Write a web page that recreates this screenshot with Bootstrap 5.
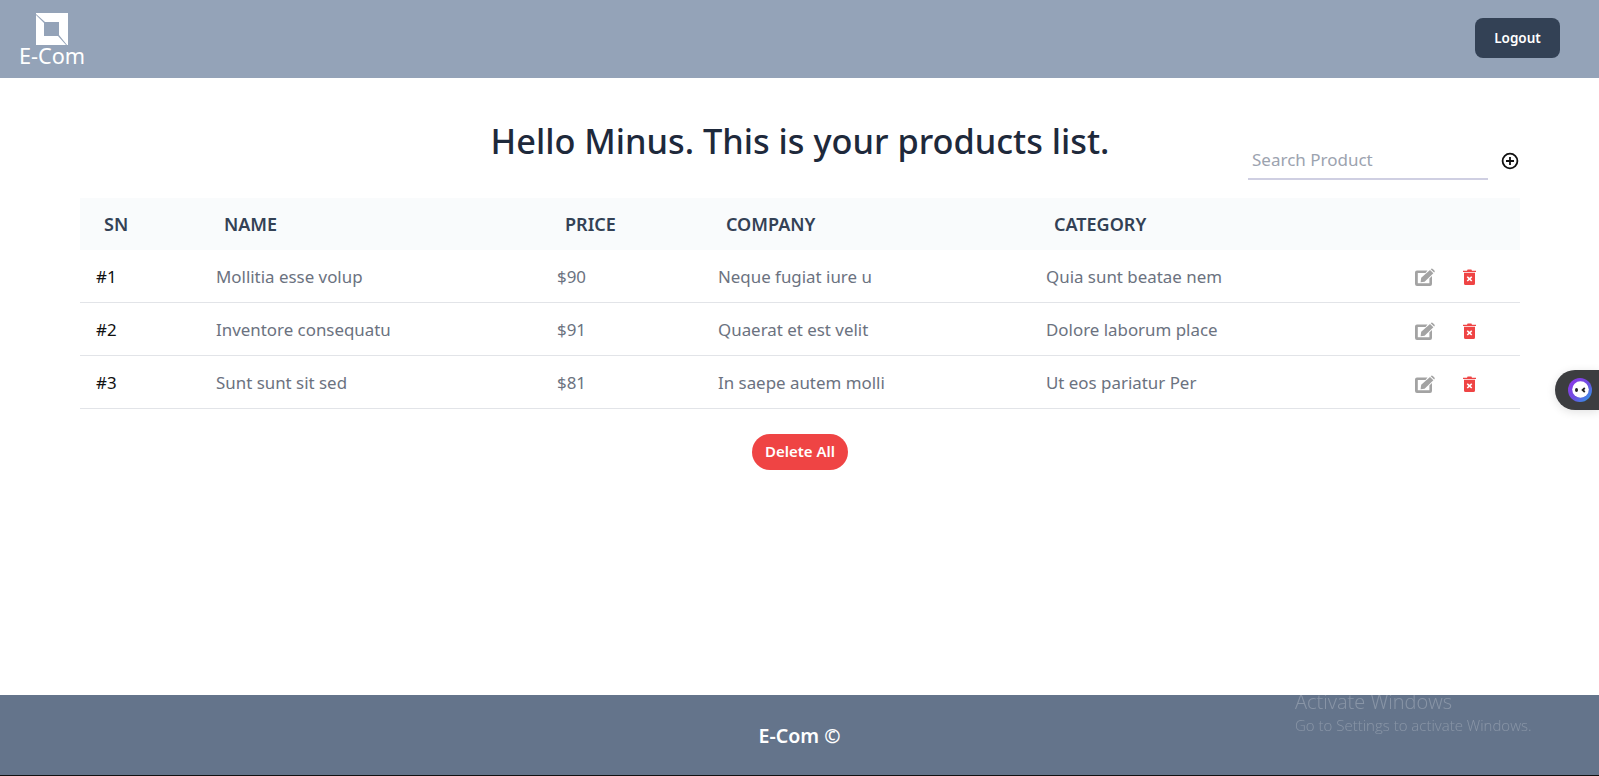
<!DOCTYPE html>
<html lang="en">
  <head>
    <meta charset="UTF-8" />
    <meta name="viewport" content="width=device-width, initial-scale=1.0" />
    <title>E-Com</title>
    <link
      href="https://cdn.jsdelivr.net/npm/bootstrap@5.3.0/dist/css/bootstrap.min.css"
      rel="stylesheet"
    />
    <style>
      body {
        font-family: "Noto Sans", "Open Sans", sans-serif;
        height: 776px;
        overflow: hidden;
      }
      .top-bar {
        height: 78px;
        background-color: #94a3b8;
        padding: 0 39px 0 19px;
      }
      .brand-box {
        width: 66px;
        color: #fff;
        font-size: 21.7px;
        line-height: 21px;
        padding-top: 13px;
        white-space: nowrap;
      }
      .btn-logout {
        width: 85px;
        height: 40px;
        background-color: #334155;
        color: #fff;
        font-size: 13.5px;
        font-weight: 600;
        border-radius: 8px;
        border: 0;
        margin-bottom: 2px;
      }
      .page-main {
        padding: 0 79px 0 80px;
      }
      .title-row {
        display: grid;
        grid-template-columns: 1fr auto 1fr;
        height: 120px;
      }
      .page-title {
        font-size: 34.3px;
        font-weight: 500;
        color: #1e293b;
        margin: 39px 0 0;
        line-height: 47px;
      }
      .search-box {
        justify-self: end;
        margin-top: 66px;
        gap: 13px;
        padding-right: 1px;
      }
      .search-input {
        width: 240px;
        height: 36px;
        border: 0;
        border-bottom: 2px solid #cfcfe2;
        outline: 0;
        padding: 0 4px 3px;
        font-size: 17px;
      }
      .search-input::placeholder {
        color: #9ca3af;
      }
      .product-table {
        table-layout: fixed;
        margin-bottom: 0;
      }
      .product-table th {
        background-color: #f9fbfc;
        color: #334155;
        font-size: 18px;
        font-weight: 600;
        height: 52px;
        padding: 0 0 0 24px;
        vertical-align: middle;
        border-bottom: 0;
      }
      .product-table td {
        color: #6b7280;
        font-size: 16.9px;
        height: 53px;
        padding: 2px 0 0 16px;
        vertical-align: middle;
        border-bottom: 1px solid #e2e4e8;
      }
      .product-table tbody tr:first-child td {
        height: 52px;
        padding-top: 1px;
      }
      .product-table td.row-num {
        color: #111;
      }
      .row-actions {
        gap: 27px;
        padding-left: 49px;
        padding-top: 2px;
      }
      .btn-delete-all {
        width: 96px;
        height: 36px;
        background-color: #ef4444;
        color: #fff;
        font-size: 15px;
        font-weight: 600;
        border: 0;
        border-radius: 18px;
        padding: 0;
        margin-top: 25px;
      }
      .page-foot {
        height: 81px;
        background-color: #64748b;
        color: #fff;
        font-size: 19.6px;
        font-weight: 600;
        padding-top: 2px;
        border-bottom: 1px solid #111;
      }
      .chat-tab {
        position: fixed;
        right: 0;
        top: 370px;
        width: 44px;
        height: 40px;
        background-color: #3c3d40;
        border-radius: 20px 0 0 20px;
        padding-left: 13px;
        display: flex;
        align-items: center;
        box-shadow: 0 2px 10px rgba(0, 0, 0, 0.12);
      }
      .activate-note {
        position: fixed;
        left: 1295px;
        top: 689px;
        color: rgba(255, 255, 255, 0.24);
        font-family: "Open Sans", sans-serif;
        font-weight: 300;
      }
      .activate-note div:first-child {
        font-size: 20px;
        line-height: 26px;
      }
      .activate-note div:last-child {
        font-size: 15px;
        line-height: 20px;
      }
    </style>
  </head>

  <body class="d-flex flex-column">
    <header class="top-bar d-flex justify-content-between align-items-center flex-shrink-0">
      <div class="brand-box text-center align-self-start">
        <svg width="32" height="32" viewBox="0 0 32 32" class="d-block mx-auto">
          <path d="M0 0H32V32H31L23 22V9H9L0 1Z" fill="#fff" />
          <path d="M0 2L8 10V23H22L30 32H0Z" fill="#fff" />
        </svg>
        <div>E-Com</div>
      </div>
      <button class="btn-logout">Logout</button>
    </header>

    <main class="page-main flex-grow-1">
      <div class="title-row">
        <div></div>
        <h1 class="page-title">Hello Minus. This is your products list.</h1>
        <div class="search-box d-flex align-items-start">
          <input class="search-input" type="text" placeholder="Search Product" />
          <svg class="mt-2" width="18" height="18" viewBox="0 0 18 18" fill="none" stroke="#111" stroke-width="1.8">
            <circle cx="9" cy="9" r="7.4" />
            <path d="M9 5V13M5 9H13" />
          </svg>
        </div>
      </div>

      <table class="table product-table">
        <colgroup>
          <col style="width: 120px" />
          <col style="width: 341px" />
          <col style="width: 161px" />
          <col style="width: 328px" />
          <col style="width: 320px" />
          <col />
        </colgroup>
        <thead>
          <tr>
            <th>SN</th>
            <th>NAME</th>
            <th>PRICE</th>
            <th>COMPANY</th>
            <th>CATEGORY</th>
            <th></th>
          </tr>
        </thead>
        <tbody id="productRows"></tbody>
      </table>

      <div class="text-center">
        <button class="btn-delete-all">Delete All</button>
      </div>
    </main>

    <footer class="page-foot d-flex justify-content-center align-items-center flex-shrink-0">
      E-Com ©
    </footer>

    <div class="chat-tab">
      <svg width="24" height="24" viewBox="0 0 24 24">
        <defs>
          <linearGradient id="chatRing" x1="0" y1="0" x2="1" y2="1">
            <stop offset="0" stop-color="#9333ea" />
            <stop offset="0.55" stop-color="#6d4fe0" />
            <stop offset="1" stop-color="#22a7e8" />
          </linearGradient>
        </defs>
        <circle cx="12" cy="12" r="12" fill="url(#chatRing)" />
        <circle cx="12.5" cy="11.5" r="8.3" fill="#fff" />
        <ellipse cx="8.5" cy="12" rx="1.5" ry="2.1" fill="#222" />
        <path d="M16.8 10L14.6 12L16.8 14" fill="none" stroke="#222" stroke-width="1.8" />
      </svg>
    </div>

    <div class="activate-note">
      <div>Activate Windows</div>
      <div>Go to Settings to activate Windows.</div>
    </div>

    <script src="https://cdn.jsdelivr.net/npm/bootstrap@5.3.0/dist/js/bootstrap.bundle.min.js"></script>
    <script>
      const products = [
        ["Mollitia esse volup", "$90", "Neque fugiat iure u", "Quia sunt beatae nem"],
        ["Inventore consequatu", "$91", "Quaerat et est velit", "Dolore laborum place"],
        ["Sunt sunt sit sed", "$81", "In saepe autem molli", "Ut eos pariatur Per"],
      ];

      const editIcon = `<svg width="21" height="18" viewBox="0 0 21 18">
        <path fill-rule="evenodd" d="M2 2.5H12.5L10.5 5H2.8V15.2H14.4V10.5L17 8V16A2 2 0 0 1 15 18H2A2 2 0 0 1 0 16V4.5A2 2 0 0 1 2 2.5Z" fill="#a3a3a3"/>
        <path d="M6.2 9.8L15 1.9L18.4 5.3L9.6 13.7L5.6 14.2Z" fill="#a3a3a3"/>
        <path d="M16 1Q16.9 .2 17.8 1L19.4 2.6Q20.2 3.5 19.4 4.3L19.1 4.6L15.7 1.2Z" fill="#a3a3a3"/>
      </svg>`;

      const trashIcon = `<svg width="13" height="16" viewBox="0 0 13 16">
        <path d="M0 1.8H4L4.6 .4H8.4L9 1.8H13V3H0Z" fill="#ef4444"/>
        <path fill-rule="evenodd" d="M1 3.8H12V14.5A1.5 1.5 0 0 1 10.5 16H2.5A1.5 1.5 0 0 1 1 14.5ZM4.8 7.2L3.7 8.3L5.3 9.9L3.7 11.5L4.8 12.6L6.5 11L8.2 12.6L9.3 11.5L7.7 9.9L9.3 8.3L8.2 7.2L6.5 8.8Z" fill="#ef4444"/>
      </svg>`;

      const tbody = document.getElementById("productRows");
      products.forEach((p, i) => {
        const row = document.createElement("tr");
        row.innerHTML = `<td class="row-num">#${i + 1}</td>
                         <td>${p[0]}</td>
                         <td>${p[1]}</td>
                         <td>${p[2]}</td>
                         <td>${p[3]}</td>
                         <td><div class="row-actions d-flex align-items-center">${editIcon}${trashIcon}</div></td>`;
        tbody.appendChild(row);
      });
    </script>
  </body>
</html>
